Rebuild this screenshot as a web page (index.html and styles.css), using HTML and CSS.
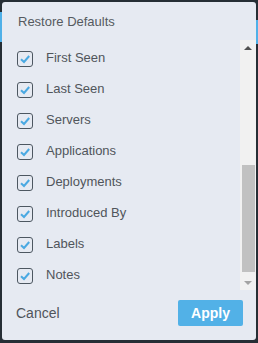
FILE: index.html
```html
<!DOCTYPE html>
<html lang="en">
<head>
    <meta charset="UTF-8">
    <title>Columns</title>

    <link rel="stylesheet" href="styles.css">
</head>

<body>
<div class="panel">
    <div class="panel-head">Restore Defaults</div>

    <div class="list-wrap">
        <ul class="column-list">
            <li><span class="box"></span>First Seen</li>
            <li><span class="box"></span>Last Seen</li>
            <li><span class="box"></span>Servers</li>
            <li><span class="box"></span>Applications</li>
            <li><span class="box"></span>Deployments</li>
            <li><span class="box"></span>Introduced By</li>
            <li><span class="box"></span>Labels</li>
            <li><span class="box"></span>Notes</li>
        </ul>

        <div class="scrollbar">
            <div class="arrow up"></div>
            <div class="track"><div class="thumb"></div></div>
            <div class="arrow down"></div>
        </div>
    </div>

    <div class="panel-foot">
        <span class="cancel">Cancel</span>
        <button class="apply">Apply</button>
    </div>
</div>

<script src="script.js"></script>
</body>
</html>
```

FILE: script.js
```js
var check = '<svg width="14" height="14" viewBox="0 0 14 14"><path d="M3 7.2 L6 10 L11.2 4" fill="none" stroke="#4aa9e2" stroke-width="2"/></svg>';

var boxes = document.querySelectorAll(".box");
for (var i = 0; i < boxes.length; i++) {
  boxes[i].innerHTML = check;
}
```

FILE: styles.css
```css
html, body {
    margin: 0;
    height: 100%;
}

body {
    background-color: #262e35;
    background-image:
        linear-gradient(#4fb0e8, #4fb0e8),
        linear-gradient(#4fb0e8, #4fb0e8);
    background-repeat: no-repeat;
    background-size: 2px 30px, 2px 24px;
    background-position: 0 12px, right 0 top 20px;
    font-family: "Liberation Sans", Arial, sans-serif;
    overflow: hidden;
}

.panel {
    margin: 2px 2px 0 2px;
    height: 338px;
    background-color: #e6eaf2;
    border-radius: 3px;
    display: flex;
    flex-direction: column;
}

.panel-head {
    height: 38px;
    padding-left: 16px;
    display: flex;
    align-items: center;
    font-size: 13px;
    color: #555a60;
}

.list-wrap {
    height: 250px;
    display: flex;
}

.column-list {
    flex: 1;
    list-style: none;
    margin: 0;
    padding: 2px 0 0 0;
}

.column-list li {
    height: 31px;
    display: flex;
    align-items: center;
    padding-left: 15px;
    font-size: 13px;
    color: #50555b;
}

.box {
    width: 14px;
    height: 14px;
    border: 1.5px solid #4d5761;
    border-radius: 3px;
    margin-right: 13px;
    margin-top: 2px;
    display: flex;
}

.scrollbar {
    width: 16px;
    background-color: #f1f1f1;
    display: flex;
    flex-direction: column;
}

.arrow {
    height: 15px;
    display: flex;
    align-items: center;
    justify-content: center;
}

.arrow::before {
    content: "";
    width: 0;
    height: 0;
    border-left: 4px solid transparent;
    border-right: 4px solid transparent;
}

.arrow.up::before {
    border-bottom: 4px solid #505050;
    margin-left: -1px;
}

.arrow.down::before {
    border-top: 4px solid #a3a3a3;
    margin-left: -1px;
}

.track {
    flex: 1;
    display: flex;
    flex-direction: column;
    justify-content: flex-end;
    padding: 0 1px 3px 2px;
}

.thumb {
    height: 107px;
    background-color: #c1c1c1;
}

.panel-foot {
    flex: 1;
    display: flex;
    align-items: center;
    justify-content: space-between;
    padding: 0 13px 4px 14px;
}

.cancel {
    font-size: 14px;
    color: #50555b;
}

.apply {
    width: 65px;
    height: 26px;
    border: none;
    border-radius: 2px;
    background-color: #52b1e7;
    color: #fff;
    font-family: "Liberation Sans", Arial, sans-serif;
    font-size: 14px;
    font-weight: bold;
}
```
